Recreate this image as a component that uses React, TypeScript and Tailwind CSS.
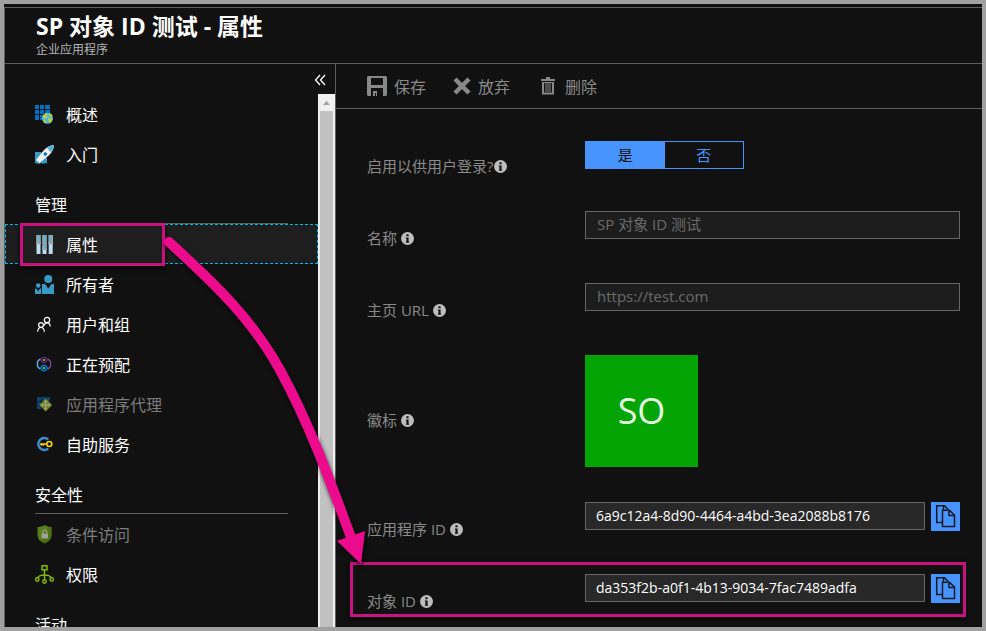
import type { ReactNode } from "react";

const OverviewIcon = () => (
  <svg viewBox="0 0 20 20" className="size-5">
    <g fill="#0072c6">
      <rect x="0" y="1" width="4" height="4" /><rect x="5" y="1" width="4" height="4" /><rect x="10" y="1" width="5" height="4" />
      <rect x="0" y="6" width="4" height="4" /><rect x="5" y="6" width="4" height="4" /><rect x="10" y="6" width="5" height="4" />
      <rect x="0" y="11" width="4" height="5" /><rect x="5" y="11" width="4" height="5" />
    </g>
    <circle cx="12.500" cy="14.300" r="5.500" fill="#59b4d9" />
    <path d="M8 11.300 11 9.100l1.500 1.200-1 1.500 1 1-2 2-2.500-.6zM14 9.800l2-.2 1.400 2.200-1.600 1.500-1.400-1.200zM13 14.300l3.500.5 1 1-2 3-1.500-1-1-2zM8 15.800l3 1v2.500l-2-1z" fill="#b8d432" />
  </svg>
);

const RocketIcon = () => (
  <svg viewBox="0 0 20 20" className="size-5">
    <path d="M0 8h6l6 6v5.500l-3-.5-1 1-2-1-2 1-4-1z" fill="#3999c6" />
    <path d="M1 16 9 6c3-3 6-4.500 10-5-.3 4-2 7.500-5 10.300L4.500 19z" fill="#f2f2f2" />
    <path d="M11.500 3.700C14 2 16.500 1.200 19 1c-.2 2.700-1 5-2.500 7.500z" fill="#59b4d9" />
    <circle cx="10.300" cy="10" r="1.800" fill="#0072c6" />
  </svg>
);

const PropertiesIcon = () => (
  <svg viewBox="0 0 20 20" className="size-5">
    <g fill="#b9ddec">
      <rect x="1.500" y="1" width="4" height="19" /><rect x="7.500" y="1" width="4" height="19" /><rect x="13.700" y="1" width="4" height="19" />
    </g>
    <g fill="#a0a1a2">
      <rect x="1.500" y="1" width="4" height="7" /><rect x="7.500" y="1" width="4" height="13" /><rect x="13.700" y="1" width="4" height="7" />
      <rect x="1" y="8" width="5" height="2" /><rect x="7" y="14" width="5" height="2" /><rect x="13.200" y="8" width="5" height="2" />
    </g>
    <g fill="#59b4d9">
      <rect x="2.500" y="1" width="2" height="7" /><rect x="8.500" y="1" width="2" height="13" /><rect x="14.700" y="1" width="2" height="7" />
    </g>
  </svg>
);

const OwnersIcon = () => (
  <svg viewBox="0 0 20 20" className="size-5" fill="#3999c6">
    <circle cx="13.300" cy="5" r="4" />
    <circle cx="3.200" cy="11.500" r="2.300" />
    <path d="M7 10h3l3.300 4.500 3.200-4.500H19V20H7z" />
    <path d="M0 14.500h1.300l2 2.500 1.700-2.500h1.200V20H0z" />
  </svg>
);

const UsersIcon = () => (
  <svg viewBox="0 0 20 20" className="size-5" fill="none" stroke="#fff" strokeWidth="1.200">
    <circle cx="12" cy="6" r="2.700" />
    <circle cx="6" cy="11" r="2.400" />
    <path d="M9 11.500c.7-2 2-2.700 3.200-2.700 1.800 0 2.900 1.400 3 3.700M2.700 17.700c.1-2.700 1.500-4.200 3.300-4.200s3.200 1.500 3.300 4.200" />
  </svg>
);

const ProvisioningIcon = () => (
  <svg viewBox="0 0 20 20" className="size-5" fill="none" strokeWidth="1.400">
    <path d="M6 5.500H4.500L2.500 7.500v5L4.500 14.500H6" stroke="#59b4d9" />
    <path d="M12 5.500h1.500l2 2v5l-2 2H12" stroke="#804998" />
    <circle cx="9" cy="6" r="2.600" stroke="#68217a" />
    <circle cx="9" cy="14" r="2.600" stroke="#0072c6" strokeWidth="1.600" />
    <path d="M5 5.500 6.500 6.500M13 5.500 11.500 6.500" stroke="#68217a" />
    <path d="M5 14.500 6.500 13.500M13 14.500 11.500 13.500" stroke="#0072c6" />
    <rect x="8" y="5" width="2" height="2" fill="#7fba00" />
    <rect x="8" y="13" width="2" height="2" fill="#7fba00" />
  </svg>
);

const ProxyIcon = () => (
  <svg viewBox="0 0 20 20" className="size-5">
    <g fill="#0b4274">
      <rect x="2" y="3" width="4" height="4" /><rect x="6.500" y="3" width="4" height="4" /><rect x="11" y="3" width="4" height="4" />
      <rect x="2" y="7.500" width="4" height="4" /><rect x="2" y="12" width="4" height="3" />
    </g>
    <path d="M10.700 4.500 17.200 11l-6.500 6.500L4.200 11z" fill="#74881f" />
    <path d="M10.700 6.500v9M6.500 11h8.500M9.500 7.700l1.200-1.200 1.200 1.200M9.500 14.300l1.200 1.200 1.200-1.200M7.700 9.800 6.500 11l1.200 1.200M13.700 9.800 14.900 11l-1.200 1.200" stroke="#aaa99a" fill="none" />
  </svg>
);

const SelfServiceIcon = () => (
  <svg viewBox="0 0 20 20" className="size-5" fill="none">
    <path d="M13.300 5.500A6 6 0 1 0 13.300 14.500" stroke="#3a8fd4" strokeWidth="2.400" />
    <circle cx="14.300" cy="10" r="2.500" stroke="#fcd116" strokeWidth="1.600" />
    <path d="M5 10h7M6.500 10v1.800M8.500 10v1.800" stroke="#fcd116" strokeWidth="1.500" />
  </svg>
);

const ShieldIcon = () => (
  <svg viewBox="0 0 20 20" className="size-5">
    <path d="M9.700 1c2 1.500 4.300 2 7 2v7.500c0 4.500-3 7.500-7 9-4-1.500-7-4.500-7-9V3c2.700 0 5-.5 7-2z" fill="#4a7010" />
    <path d="M9.700 1c-2 1.500-4.300 2-7 2v7.500c0 2.500 1 4.600 2.500 6.200L14 2.900C12.300 2.600 11 2 9.700 1z" fill="#587d1d" />
    <rect x="6.500" y="9.500" width="6.500" height="5" fill="#a0a29a" />
    <path d="M7.800 9.500V8a2 2 0 0 1 4 0v1.500" fill="none" stroke="#a0a29a" strokeWidth="1.200" />
  </svg>
);

const PermissionsIcon = () => (
  <svg viewBox="0 0 20 20" className="size-5" fill="none" stroke="#7fba00" strokeWidth="1.500">
    <rect x="7" y="1.800" width="5" height="4" />
    <circle cx="2.300" cy="15.500" r="1.700" /><circle cx="9.500" cy="17.500" r="1.700" /><circle cx="16.700" cy="15.500" r="1.700" />
    <path d="M9.500 6v9.800M9.500 11c-4 0-6 1-6.500 3M9.500 11c4 0 6 1 6.500 3" />
  </svg>
);

const InfoIcon = () => (
  <svg viewBox="0 0 12 12" className="size-[13px] shrink-0">
    <circle cx="6" cy="6" r="6" fill="#bdbdbd" />
    <path d="M5 2h2v2H5zM4.500 5H7v4h.5v1h-3V9H5V6h-.5z" fill="#111" />
  </svg>
);

const SaveIcon = () => (
  <svg viewBox="0 0 20 20" className="size-5">
    <path d="M1 0h18l1 1v18l-1 1H1l-1-1V1z" fill="#888" />
    <path d="M4 2h12v7H4zM4 12h12v8H4z" fill="#111" />
    <path d="M6 15h4v5H9v-3H8v3H6z" fill="#888" />
  </svg>
);

const DiscardIcon = () => (
  <svg viewBox="0 0 18 18" className="size-[18px]">
    <path d="M2 2 16 16M16 2 2 16" stroke="#888" strokeWidth="4.500" />
  </svg>
);

const TrashIcon = () => (
  <svg viewBox="0 0 14 18" className="h-[18px] w-[14px]" fill="none" stroke="#888">
    <path d="M0 3h14" strokeWidth="2" />
    <path d="M5 1h4" strokeWidth="2" />
    <path d="M2 5v11.500h10V5" strokeWidth="2" />
    <path d="M5 5v10M7 5v10M9 5v10" strokeWidth="1" />
    <path d="M1.500 5.500h11" strokeWidth="1" />
  </svg>
);

const CopyIcon = () => (
  <svg viewBox="0 0 29 29" className="size-[29px]" fill="none" stroke="#101820" strokeWidth="1.500">
    <path d="M11 20.500H5.700V3.700h7.800l3.500 3.500" />
    <path d="M11.500 8.200h7l5 5v11.300h-12z" fill="#4894fe" />
    <path d="M18 8.500v5h5.500" />
    <path d="M12.500 4v3.500" />
  </svg>
);

type Item = { label: string; icon: ReactNode; selected?: boolean; disabled?: boolean };

const topItems: Item[] = [
  { label: "概述", icon: <OverviewIcon /> },
  { label: "入门", icon: <RocketIcon /> },
];
const manageItems: Item[] = [
  { label: "属性", icon: <PropertiesIcon />, selected: true },
  { label: "所有者", icon: <OwnersIcon /> },
  { label: "用户和组", icon: <UsersIcon /> },
  { label: "正在预配", icon: <ProvisioningIcon /> },
  { label: "应用程序代理", icon: <ProxyIcon />, disabled: true },
  { label: "自助服务", icon: <SelfServiceIcon /> },
];
const securityItems: Item[] = [
  { label: "条件访问", icon: <ShieldIcon />, disabled: true },
  { label: "权限", icon: <PermissionsIcon /> },
];

function NavItem({ label, icon, selected, disabled }: Item) {
  return (
    <li className="relative">
      <a
        href="#"
        aria-current={selected ? "page" : undefined}
        className={`flex h-10 items-center gap-[11px] border border-dashed pl-[29px] text-base ${
          selected ? "border-[#00b4f0] bg-[#1e1e1e]" : "border-transparent"
        } ${disabled ? "text-[#7c7c7c]" : "text-white"}`}
      >
        {icon}
        <span className="pt-0.5">{label}</span>
      </a>
      {selected && (
        <span className="pointer-events-none absolute -top-px left-[15px] h-[43px] w-[145px] border-3 border-[#c9127f] shadow-[0_2px_4px_#000]" />
      )}
    </li>
  );
}

function NavGroup({ title, items }: { title: string; items: Item[] }) {
  return (
    <section>
      <h2 className="mx-[30px] flex h-[50px] items-end border-b border-[#5e5e5e] pb-1.5 text-base text-white">{title}</h2>
      <ul>
        {items.map((i) => (
          <NavItem key={i.label} {...i} />
        ))}
      </ul>
    </section>
  );
}

function Label({ text, htmlFor, tight, className = "pt-[17px]" }: { text: string; htmlFor: string; tight?: boolean; className?: string }) {
  return (
    <div className={`flex w-[218px] shrink-0 items-center text-[15px] leading-5 text-[#8a8a8a] ${tight ? "gap-px" : "gap-1"} ${className}`}>
      <label htmlFor={htmlFor}>{text}</label>
      <InfoIcon />
    </div>
  );
}

function TextRow({ id, label, value }: { id: string; label: string; value: string }) {
  return (
    <div className="flex min-h-11 items-start">
      <Label text={label} htmlFor={id} />
      <input
        id={id}
        defaultValue={value}
        disabled
        className="h-7 min-w-0 flex-1 border border-[#666] bg-[#1d1d1d] px-[11px] pb-[3px] text-[15px] text-[#6a6a6a]"
      />
    </div>
  );
}

function CopyRow({ id, label, value, highlight }: { id: string; label: string; value: string; highlight?: boolean }) {
  return (
    <div className="relative flex min-h-11 items-start">
      <Label text={label} htmlFor={id} />
      <input
        id={id}
        defaultValue={value}
        readOnly
        className="h-7 min-w-0 flex-1 border border-[#666] bg-[#282828] px-2.5 pb-0.5 text-sm text-white"
      />
      <button type="button" aria-label="复制" className="ml-1.5 size-[29px] shrink-0 bg-[#4894fe]">
        <CopyIcon />
      </button>
      {highlight && (
        <span className="pointer-events-none absolute -top-3 -right-1.5 -left-[17px] h-[55px] border-3 border-[#c9127f] shadow-[0_2px_4px_#000]" />
      )}
    </div>
  );
}

export default function App() {
  return (
    <div className="relative h-screen overflow-hidden bg-[#a0a0a0] p-1 font-['Open_Sans','Noto_Sans_CJK_SC',sans-serif]">
      <div className="flex h-full flex-col overflow-hidden bg-[#111] pt-[3px]">
        <header className="h-[57px] shrink-0 border-y border-l border-[#5e5e5e] pt-0.5 pl-[31px]">
          <h1 className="text-[23px] leading-8 font-bold text-white">SP 对象 ID 测试 - 属性</h1>
          <p className="text-xs leading-4 text-[#b4b4b4]">企业应用程序</p>
        </header>
        <div className="flex min-h-0 flex-1">
          <aside className="flex w-[332px] shrink-0 flex-col overflow-hidden border-x border-[#5e5e5e]">
            <div className="flex h-[30px] shrink-0 items-center justify-end pt-0.5 pr-[7px]">
              <button type="button" aria-label="折叠" className="p-0.5">
                <svg viewBox="0 0 12 12" className="size-3" fill="none" stroke="#fff" strokeWidth="1.300">
                  <path d="M6 1 1.500 6 6 11M11 1 6.500 6l4.500 5" />
                </svg>
              </button>
            </div>
            <div className="flex min-h-0 flex-1">
              <nav className="min-w-0 flex-1 overflow-hidden">
                <ul>
                  {topItems.map((i) => (
                    <NavItem key={i.label} {...i} />
                  ))}
                </ul>
                <NavGroup title="管理" items={manageItems} />
                <NavGroup title="安全性" items={securityItems} />
                <NavGroup title="活动" items={[]} />
              </nav>
              <div className="flex w-[17px] shrink-0 flex-col bg-[#f0f0f0] px-0.5">
                <svg viewBox="0 0 13 17" className="h-[17px] w-[13px] shrink-0">
                  <path d="M3 11 6.500 7l3.500 4z" fill="#a0a0a0" />
                </svg>
                <div className="flex-1 bg-[#c1c1c1]" />
              </div>
            </div>
          </aside>
          <main className="min-w-0 flex-1">
            <div className="flex h-[45px] items-center border-b border-[#5e5e5e] pl-[31px] text-base text-[#8a8a8a]">
              <button type="button" className="mr-[27px] flex items-center gap-[7px]">
                <SaveIcon />
                <span className="pt-0.5">保存</span>
              </button>
              <button type="button" className="mr-[31px] flex items-center gap-[7px]">
                <DiscardIcon />
                <span className="pt-0.5">放弃</span>
              </button>
              <button type="button" className="flex items-center gap-[10px]">
                <TrashIcon />
                <span className="pt-0.5">删除</span>
              </button>
            </div>
            <form className="flex flex-col gap-7 pt-[30px] pr-[22px] pl-[31px]">
              <div className="flex min-h-11 items-start">
                <Label text="启用以供用户登录?" htmlFor="enabled-yes" tight />
                <div className="mt-0.5 flex h-7 w-[159px] border border-[#4894fe] text-[15px]">
                  <button id="enabled-yes" type="button" aria-pressed="true" className="flex flex-1 items-center justify-center bg-[#4894fe] text-[#111]">
                    是
                  </button>
                  <button type="button" aria-pressed="false" className="flex flex-1 items-center justify-center text-[#4894fe]">
                    否
                  </button>
                </div>
              </div>
              <TextRow id="name" label="名称" value="SP 对象 ID 测试" />
              <TextRow id="homepage" label="主页 URL" value="https://test.com" />
              <div className="flex items-start pb-[7px]">
                <Label text="徽标" htmlFor="logo" className="pt-[55px]" />
                <output id="logo" className="flex h-28 w-[113px] items-center justify-center bg-[#04a404] text-4xl text-[#e6f8e0]">
                  SO
                </output>
              </div>
              <CopyRow id="app-id" label="应用程序 ID" value="6a9c12a4-8d90-4464-a4bd-3ea2088b8176" />
              <CopyRow id="object-id" label="对象 ID" value="da353f2b-a0f1-4b13-9034-7fac7489adfa" highlight />
            </form>
          </main>
        </div>
      </div>
      <svg
        viewBox="0 0 380 600"
        className="pointer-events-none absolute top-0 left-0 h-[600px] w-[380px] drop-shadow-[1px_3px_2px_rgba(0,0,0,0.7)]"
      >
        <path d="M169 242C215 284 252 319 280 370S328 475 352 540" fill="none" stroke="#ec0b8d" strokeWidth="10" strokeLinecap="round" />
        <path d="M337 541 365 531 361 564z" fill="#ec0b8d" />
      </svg>
    </div>
  );
}
